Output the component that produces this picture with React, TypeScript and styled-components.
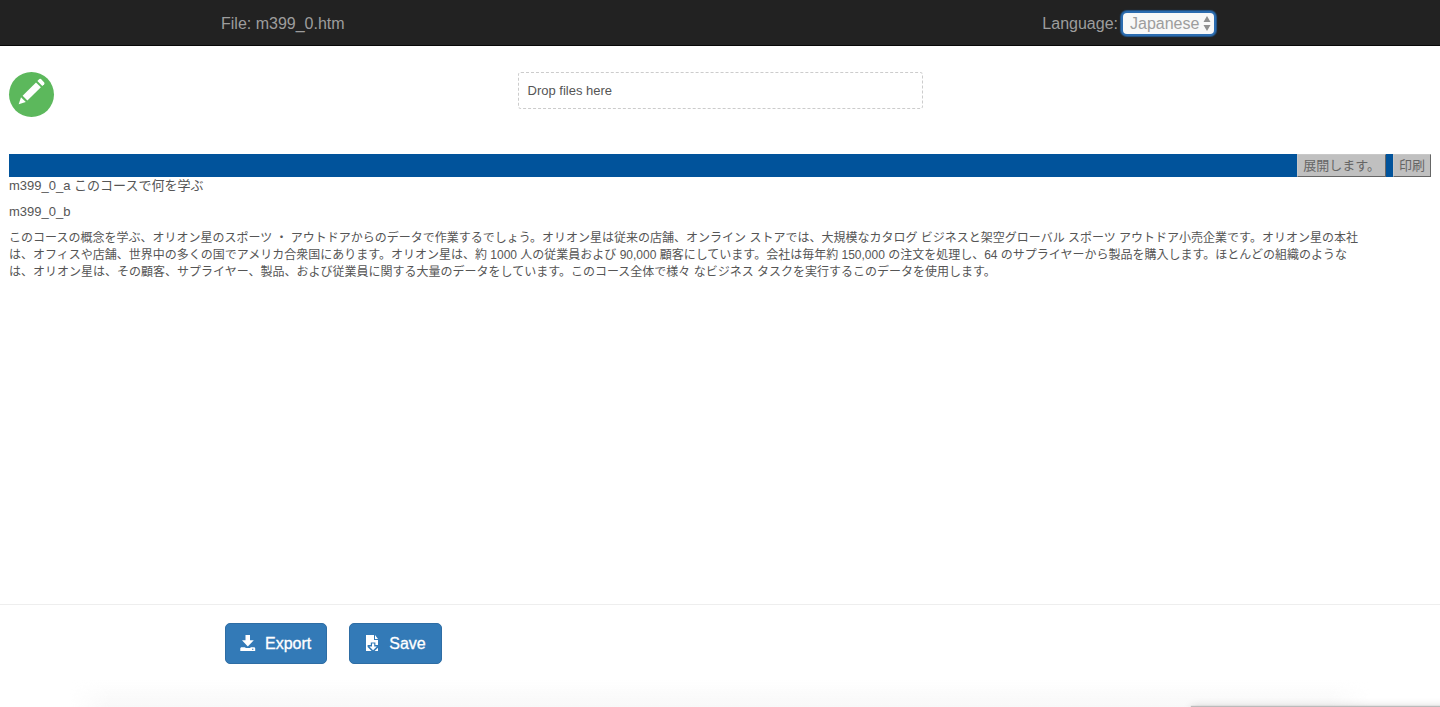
import React, { useState } from "react";
import styled, { createGlobalStyle } from "styled-components";

const GlobalStyle = createGlobalStyle`
  *, *::before, *::after { box-sizing: border-box; }
  body {
    margin: 0;
    background: #fff;
    color: #555;
    font-family: "Liberation Sans", "Noto Sans CJK JP", sans-serif;
    font-size: 13px;
    line-height: 17px;
  }
  button, select { font-family: inherit; }
`;

const Page = styled.div`
  display: flex;
  flex-direction: column;
  min-height: 100vh;
`;

const Navbar = styled.header`
  background: #222;
  border-bottom: 1px solid #080808;
  color: #9d9d9d;
  font-size: 16px;
  line-height: 21px;
`;

const Container = styled.div`
  display: flex;
  align-items: center;
  max-width: 1000px;
  margin: 0 auto;
`;

const NavContainer = styled(Container)`
  justify-content: space-between;
  padding: 13px 6px 11px 1px;
`;

const LanguageField = styled.div`
  display: flex;
  align-items: center;
  gap: 5px;
`;

const SelectWrap = styled.div`
  position: relative;
`;

const Select = styled.select`
  display: block;
  appearance: none;
  height: 21px;
  width: 91px;
  padding: 0 0 0 7px;
  border: 0;
  border-radius: 4px;
  outline: 0;
  background: #f8f8f8;
  box-shadow: 0 0 0 2px #2b6cb0, 0 0 1px 3px #24568a;
  color: #9d9d9d;
  font-size: 16px;
  line-height: 21px;
`;

const SelectArrows = styled.svg`
  position: absolute;
  top: 3px;
  right: 3px;
  pointer-events: none;
`;

const Main = styled.main`
  flex: 1;
  padding: 26px 9px 0;
`;

const Toolbar = styled.div`
  display: grid;
  grid-template-columns: 1fr 405px 1fr;
  align-items: start;
  min-height: 82px;
`;

const EditButton = styled.button`
  display: block;
  width: 45px;
  height: 45px;
  padding: 0;
  border: 0;
  border-radius: 50%;
  background: #5cb85c;
`;

const DropZone = styled.div`
  padding: 9px;
  border: 1px dashed #ccc;
  border-radius: 3px;
`;

const ActionBar = styled.div`
  display: flex;
  justify-content: flex-end;
  gap: 7px;
  height: 23px;
  background: #01539b;
`;

const BarButton = styled.button`
  padding: 0 5px;
  border: 1px solid;
  border-color: #c8c8c8 #666 #666 #c8c8c8;
  background: #c0c0c0;
  color: #666;
  font-size: 13px;
  line-height: 21px;
  white-space: nowrap;
`;

const Line = styled.p`
  margin: 0 0 9px;
`;

const Passage = styled.p`
  margin: 10px 0 0;
  font-size: 12px;
`;

const Footer = styled.footer`
  position: relative;
  min-height: 103px;
  border-top: 1px solid #eee;
  overflow: hidden;

  &::before {
    content: "";
    position: absolute;
    inset: auto 70px 0;
    height: 27px;
    background: linear-gradient(transparent, #f8f8f8);
    mask-image: linear-gradient(90deg, transparent, #000 40px, #000 calc(100% - 40px), transparent);
  }

  &::after {
    content: "";
    position: absolute;
    left: calc(100% - 248px);
    right: -10px;
    top: 100%;
    height: 10px;
    box-shadow: 0 0 1px 1px #bbb, 0 0 8px #ccc;
  }
`;

const FooterContainer = styled(Container)`
  gap: 22px;
  padding: 18px 5px;
`;

const ActionButton = styled.button`
  position: relative;
  z-index: 1;
  display: flex;
  align-items: center;
  gap: 9px;
  height: 41px;
  padding: 0 15px 0 14px;
  border: 1px solid #2e6da4;
  border-radius: 5px;
  background: #337ab7;
  color: #fff;
  font-size: 16px;
  line-height: 21px;
  -webkit-text-stroke: 0.3px #fff;
`;

const Icon = styled.svg`
  display: block;
  margin-bottom: 2px;
`;

function PencilIcon() {
  return (
    <svg width="45" height="45" viewBox="0 0 45 45" fill="#fff" aria-hidden="true">
      <path d="M28.4 9 30.4 7.1Q31.2 6.4 32 7.1L35.2 10.6Q35.9 11.4 35.2 12.2L33.3 14.1Z" />
      <path d="M13.6 23.8 27 10.4 31.9 15.2 18.4 28.6Z" />
      <path d="M9.7 32.3 12 25.2 16.8 30Z" />
    </svg>
  );
}

function ExportIcon() {
  return (
    <Icon width="16" height="16" viewBox="0 0 16 16" fill="#fff" aria-hidden="true">
      <path d="M5.5 0h4.5v5.3h3.8L7.8 11.4 2 5.3h3.5Z" />
      <path
        fillRule="evenodd"
        d="M1.1 12.2h3.6l1.3.7h3.8l1.3-.7h3.4l.7 1V16H.3v-2.8ZM12 13.7v1h1.4v-1Z"
      />
    </Icon>
  );
}

function SaveIcon() {
  return (
    <Icon width="16" height="16" viewBox="0 0 16 16" fill="#fff" aria-hidden="true">
      <path d="M2 0h8v5h4v11H2Z" />
      <path d="M11 0 14 4h-3Z" />
      <path d="M6.8 7.4h4.6v2.7H14v2.6L10.6 16H7.6L3.6 12v-1.9h3.2Z" fill="#337ab7" />
      <path d="M8 8.6h2.2v3h2.6L9.1 15.2 5.4 11.6H8Z" />
    </Icon>
  );
}

export default function App() {
  const [language, setLanguage] = useState("Japanese");

  return (
    <>
      <GlobalStyle />
      <Page>
        <Navbar>
          <NavContainer>
            <span>File: m399_0.htm</span>
            <LanguageField>
              <label htmlFor="language">Language:</label>
              <SelectWrap>
                <Select
                  id="language"
                  value={language}
                  onChange={(event) => setLanguage(event.target.value)}
                >
                  <option>Japanese</option>
                  <option>English</option>
                </Select>
                <SelectArrows width="8" height="15" viewBox="0 0 8 15" fill="#8f8f8f" aria-hidden="true">
                  <path d="M4 0 7.5 6h-7ZM4 15 .5 9h7Z" />
                </SelectArrows>
              </SelectWrap>
            </LanguageField>
          </NavContainer>
        </Navbar>

        <Main>
          <Toolbar>
            <EditButton type="button" aria-label="Edit">
              <PencilIcon />
            </EditButton>
            <DropZone>Drop files here</DropZone>
          </Toolbar>

          <ActionBar>
            <BarButton type="button">展開します。</BarButton>
            <BarButton type="button">印刷</BarButton>
          </ActionBar>
          <article lang="ja">
            <Line>m399_0_a このコースで何を学ぶ</Line>
            <Line>m399_0_b</Line>
            <Passage>
              このコースの概念を学ぶ、オリオン星のスポーツ ・ アウトドアからのデータで作業するでしょう。オリオン星は従来の店舗、オンライン ストアでは、大規模なカタログ ビジネスと架空グローバル スポーツ アウトドア小売企業です。オリオン星の本社
              <br />
              は、オフィスや店舗、世界中の多くの国でアメリカ合衆国にあります。オリオン星は、約 1000 人の従業員および 90,000 顧客にしています。会社は毎年約 150,000 の注文を処理し、64 のサプライヤーから製品を購入します。ほとんどの組織のような
              <br />
              は、オリオン星は、その顧客、サプライヤー、製品、および従業員に関する大量のデータをしています。このコース全体で様々 なビジネス タスクを実行するこのデータを使用します。
            </Passage>
          </article>
        </Main>

        <Footer>
          <FooterContainer>
            <ActionButton type="button">
              <ExportIcon />
              Export
            </ActionButton>
            <ActionButton type="button">
              <SaveIcon />
              Save
            </ActionButton>
          </FooterContainer>
        </Footer>
      </Page>
    </>
  );
}
